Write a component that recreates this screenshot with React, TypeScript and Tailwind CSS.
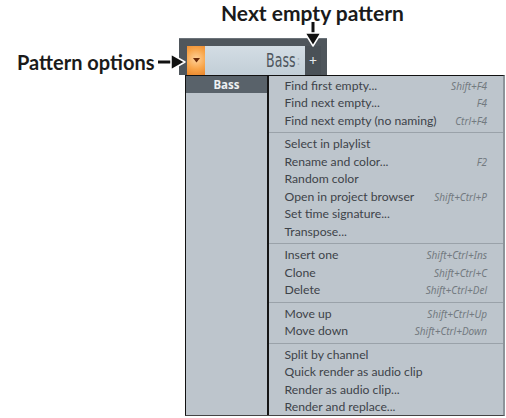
import React from "react"

type Item = { label: string; shortcut?: string }

const groups: Item[][] = [
  [
    { label: "Find first empty...", shortcut: "Shift+F4" },
    { label: "Find next empty...", shortcut: "F4" },
    { label: "Find next empty (no naming)", shortcut: "Ctrl+F4" },
  ],
  [
    { label: "Select in playlist" },
    { label: "Rename and color...", shortcut: "F2" },
    { label: "Random color" },
    { label: "Open in project browser", shortcut: "Shift+Ctrl+P" },
    { label: "Set time signature..." },
    { label: "Transpose..." },
  ],
  [
    { label: "Insert one", shortcut: "Shift+Ctrl+Ins" },
    { label: "Clone", shortcut: "Shift+Ctrl+C" },
    { label: "Delete", shortcut: "Shift+Ctrl+Del" },
  ],
  [
    { label: "Move up", shortcut: "Shift+Ctrl+Up" },
    { label: "Move down", shortcut: "Shift+Ctrl+Down" },
  ],
  [
    { label: "Split by channel" },
    { label: "Quick render as audio clip" },
    { label: "Render as audio clip..." },
    { label: "Render and replace..." },
  ],
]

function MenuRow({ item }: { item: Item }) {
  return (
    <div className="flex h-[17.5px] items-center justify-between gap-2 whitespace-nowrap pl-[16px] pr-[16px]">
      <span className="text-[12.2px] leading-none text-[#3d4349]" style={{ fontFamily: "Lato, 'Noto Sans', sans-serif" }}>
        {item.label}
      </span>
      {item.shortcut && <span className="text-[10px] italic leading-none text-[#737a80]">{item.shortcut}</span>}
    </div>
  )
}

export default function App() {
  return (
    <div
      className="relative h-[418px] w-[506px] overflow-hidden bg-white"
      style={{ fontFamily: "'Noto Sans', 'Open Sans', sans-serif" }}
    >
      {/* annotation: next empty pattern */}
      <div
        className="whitespace-nowrap pl-[221px] pt-[1px] text-[21px] font-bold leading-[24px] text-[#1a1a1a]"
        style={{ fontFamily: "Lato, 'DejaVu Sans', sans-serif" }}
      >
        Next empty pattern
      </div>

      <div className="mt-[13px] flex">
        <div
          className="w-[179px] whitespace-nowrap pl-[17px] pt-[12px] text-[20px] font-bold leading-[24px] text-[#1a1a1a]"
          style={{ fontFamily: "Lato, 'DejaVu Sans', sans-serif" }}
        >
          Pattern options
        </div>

        {/* toolbar */}
        <div className="flex h-[37px] w-[148px] items-end border-t border-[#6b737a] bg-[#4f565c] pl-[8px] pr-[6px]">
          <div className="flex h-[29px] w-[18px] items-center justify-center bg-[radial-gradient(circle_at_50%_45%,#ffd29a_0%,#f8a54a_55%,#e8842a_100%)]">
            <svg width="7" height="5" viewBox="0 0 7 5">
              <path d="M0 0 L7 0 L3.5 4.5 Z" fill="#6b2a08" />
            </svg>
          </div>
          <div className="flex h-[29px] w-[100px] items-center justify-end bg-gradient-to-b from-[#d3dde4] to-[#c2ced7] pr-[5px]">
            <span
              className="inline-block origin-right scale-x-[0.66] text-[19px] leading-none text-[#4e565d]"
              style={{ fontFamily: "'DejaVu Sans', sans-serif" }}
            >
              Bass
            </span>
            <span className="ml-[1px] text-[12px] leading-none text-[#a7b1b9]">:</span>
          </div>
          <div className="flex h-[29px] w-[16px] items-center justify-center bg-[#4a5157] text-[14px] leading-none text-[#e6e9ec]">
            +
          </div>
        </div>
      </div>

      {/* menu */}
      <div className="ml-[185px] flex h-[341px] w-[320px] border-l border-t border-[#111] border-r-[2px] border-r-[#8d949a] border-b border-b-[#444]">
        <div className="w-[81px] bg-[#bdc5cc]">
          <div className="flex h-[17px] items-center justify-center bg-[#59626a] text-[11.5px] font-bold text-[#eef1f3]">
            Bass
          </div>
        </div>
        <div className="w-[1.5px] bg-[#151515]" />
        <div className="flex-1 bg-[#bdc5cc] pt-[1px]">
          {groups.map((g, gi) => (
            <div key={gi}>
              {gi > 0 && (
                <div className="flex h-[6px] items-center">
                  <div className="h-px w-full bg-[#9aa2a9]" />
                </div>
              )}
              {g.map((item) => (
                <MenuRow key={item.label} item={item} />
              ))}
            </div>
          ))}
        </div>
      </div>

      {/* arrows */}
      <svg className="absolute left-[302px] top-[22px]" width="22" height="25" viewBox="0 0 22 25">
        <path d="M11 0 L11 14" stroke="#111" strokeWidth="3" />
        <path d="M3 11 L11 24 L19 11 Z" fill="#111" stroke="#fff" strokeWidth="1.5" strokeLinejoin="round" />
      </svg>
      <svg className="absolute left-[158px] top-[51px]" width="29" height="22" viewBox="0 0 29 22">
        <path d="M0 11 L16 11" stroke="#111" strokeWidth="3" />
        <path d="M13 3 L27 11 L13 19 Z" fill="#111" stroke="#fff" strokeWidth="1.5" strokeLinejoin="round" />
      </svg>
    </div>
  )
}
